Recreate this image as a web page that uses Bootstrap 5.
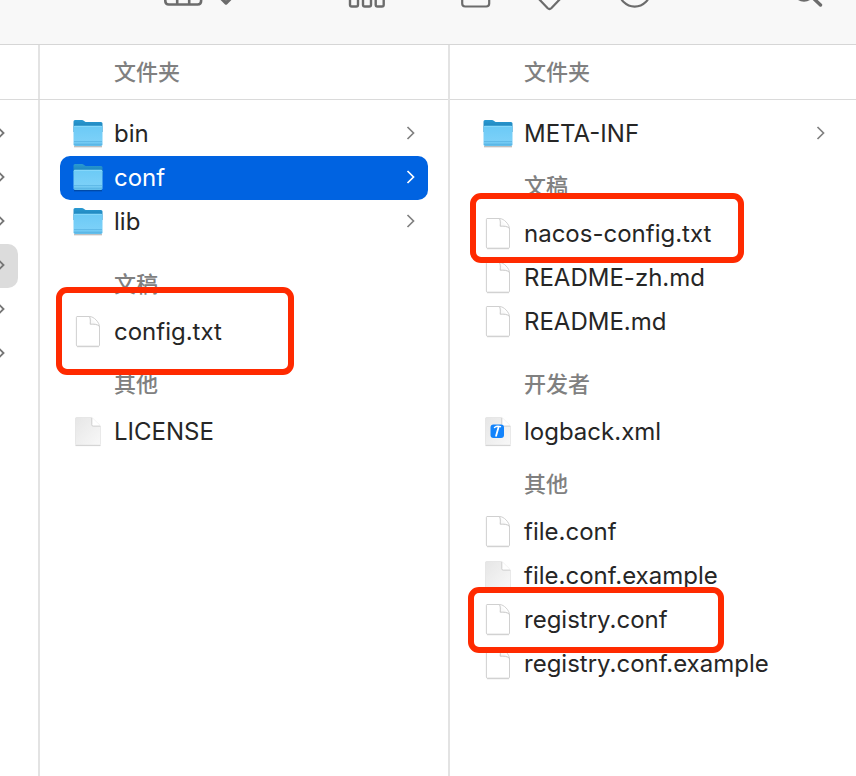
<!DOCTYPE html>
<html lang="zh-CN">
<head>
<meta charset="utf-8">
<meta name="viewport" content="width=device-width, initial-scale=1">
<title>conf</title>
<link href="https://cdn.jsdelivr.net/npm/bootstrap@5.3.0/dist/css/bootstrap.min.css" rel="stylesheet">
<style>
  body { font-family: Inter, "Noto Sans CJK SC", sans-serif; font-size: 24px; color: #262626; background: #fff; }
  .toolbar { height: 45px; background: #f8f8f8; border-bottom: 1px solid #d6d6d6; color: #6c6c6c; }
  .browser { display: grid; grid-template-columns: 40px 410fr 406fr; }
  .pane { border-right: 2px solid #e3e3e3; min-width: 0; }
  .pane:last-child { border-right: 0; }
  .pane-head { height: 55px; padding-left: 74px; border-bottom: 1px solid #dadada; }
  .pane-title, .group-title { font-size: 22px; font-weight: 500; line-height: 32px; color: #808080; margin: 0; }
  .pane-list { padding: 12px 20px; }
  .pane:last-child .pane-list { padding-right: 18px; }
  .entry { height: 44px; padding: 0 12px; gap: 10px; border-radius: 10px; color: inherit; text-decoration: none; white-space: nowrap; }
  .entry.selected { background: #0063e1; color: #fff; }
  .entry .chev { color: #808080; }
  .entry.selected .chev { color: #fff; }
  .group-title { padding: 14px 0 10px 54px; }
  .group-title.spaced { padding-top: 24px; }
  .parent-list { padding: 12px 20px 12px 0; }
  .parent { height: 44px; color: #767676; }
  .parent.current { background: #dcdcdc; border-radius: 0 10px 10px 0; }
  .marked { position: relative; }
  .marker { position: absolute; border: 6px solid #ff2a00; border-radius: 11px; pointer-events: none; z-index: 2; }
  .marker-config { left: -4px; top: -23px; width: 238px; height: 88px; }
  .marker-nacos { left: 0; top: -19px; width: 274px; height: 70px; }
  .marker-registry { left: -2px; top: -11px; width: 256px; height: 66px; }
</style>
<script src="https://cdn.jsdelivr.net/npm/bootstrap@5.3.0/dist/js/bootstrap.bundle.min.js"></script>
</head>
<body class="min-vh-100 overflow-x-hidden d-flex flex-column">
<svg width="0" height="0" class="position-absolute" aria-hidden="true">
  <defs>
    <linearGradient id="gFolder" x1="0" y1="0" x2="0" y2="1"><stop offset="0" stop-color="#6bcaf6"/><stop offset=".75" stop-color="#7bd0f8"/><stop offset="1" stop-color="#62bdea"/></linearGradient>
    <linearGradient id="gBack" x1="0" y1="0" x2="0" y2="1"><stop offset="0" stop-color="#2a9ad2"/><stop offset="1" stop-color="#1576ad"/></linearGradient>
    <linearGradient id="gGray" x1="0" y1="0" x2="1" y2="1"><stop offset="0" stop-color="#e6e6e6"/><stop offset="1" stop-color="#f8f8f8"/></linearGradient>
    <symbol id="folder" viewBox="0 1 32 32">
      <path d="M2 29.600h28" stroke="#000" stroke-opacity=".25" stroke-width="1.500"/>
      <path d="M1.500 4.500q0-1.500 1.500-1.500h7q1 0 1.800.7l1 .8q.8.600 1.800.600H29q1.500 0 1.500 1.500V15h-29z" fill="url(#gBack)"/>
      <path d="M1.500 10.200q0-1.500 1.500-1.500h26q1.500 0 1.500 1.500v17q0 1.800-1.500 1.800H3q-1.500 0-1.500-1.800z" fill="url(#gFolder)"/>
      <path d="M2 9.400h28" stroke="#91dcfb" stroke-width=".8"/>
      <path d="M2 24.500h28M2 27.300h28" stroke="#4ba9dc" stroke-width=".7" opacity=".75"/>
    </symbol>
    <symbol id="doc" viewBox="0 1 32 32">
      <path d="M5 31.700h22" stroke="#000" stroke-opacity=".2"/>
      <path d="M5 1.500h12.500c4.500 0 10 6 10 10.400v18.300q0 1-1 1H5.400q-1 0-1-1V2.500q0-1 .6-1z" fill="#fff" stroke="#cbcbcb" stroke-width=".9"/>
      <path d="M17.500 1.600c1 1.800.9 4.400.7 7.600 3.600-.2 7.600 0 9.200 2.200" fill="#fafafa" stroke="#c2c2c2" stroke-width=".9"/>
    </symbol>
    <symbol id="graydoc" viewBox="0 1 32 32">
      <path d="M3.500 30.600h25" stroke="#000" stroke-opacity=".2"/>
      <path d="M4.500 2.500h15.300l8.700 8.600v18q0 1-1 1h-23q-1 0-1-1V3.500q0-1 1-1z" fill="url(#gGray)" stroke="#dedede" stroke-width=".6"/>
      <path d="M19.800 2.500v7.300q0 1.300 1.300 1.300h7.400z" fill="#fff"/>
      <path d="M19.800 3v6.800q0 1.300 1.300 1.300h7" fill="none" stroke="#c4c4c4" stroke-width=".8"/>
    </symbol>
    <symbol id="xml" viewBox="0 0 32 32">
      <use href="#graydoc" width="32" height="32"/>
      <rect x="8.500" y="8.500" width="13.500" height="13.500" rx="3" fill="#1283fb"/>
      <path d="M16.600 11l-2.500 8.800" stroke="#fff" stroke-width="1.800" stroke-linecap="round"/>
      <path d="M12.500 11.500q2.500-2 6-.8" fill="none" stroke="#fff" stroke-width="1.400" stroke-linecap="round"/>
    </symbol>
    <symbol id="chevron" viewBox="0 1 10 16"><path d="M1.500 2l6 6-6 6" fill="none" stroke="currentColor" stroke-width="1.700"/></symbol>
    <symbol id="halfchevron" viewBox="4 1 6 16"><path d="M1.500 2l6 6-6 6" fill="none" stroke="currentColor" stroke-width="1.900"/></symbol>
  </defs>
</svg>

<header class="toolbar">
  <svg class="d-block" width="856" height="12" viewBox="0 0 856 12" fill="none" stroke="currentColor" stroke-width="2.600" stroke-linecap="round" stroke-linejoin="round" role="img" aria-label="工具栏">
    <path d="M165.300-8v9q0 3.500 3.500 3.500h28.800q3.500 0 3.500-3.500v-9M177.200-8V4M189.200-8V4"/>
    <path d="M220.500-2.500l5.500 5.500 5.500-5.500" stroke-width="3.400"/>
    <rect x="350" y="-2" width="8" height="8.500" rx="1.800" stroke-width="2.400"/><rect x="363" y="-2" width="8" height="8.500" rx="1.800" stroke-width="2.400"/><rect x="375.700" y="-2" width="8" height="8.500" rx="1.800" stroke-width="2.400"/>
    <path d="M462.200-8V3.500q0 3 3 3h21q3 0 3-3V-8" stroke-width="2.200"/>
    <path d="M537-3l10.500 11q2 2 4 0L562-3" stroke-width="2.200"/>
    <circle cx="634.700" cy="-9" r="15.600" stroke-width="2.200"/>
    <circle cx="804" cy="-9" r="9.500"/><path d="M811.500-3.500l9 8.500" stroke-width="3.400"/>
  </svg>
</header>

<main class="browser flex-grow-1">
  <section class="pane" aria-label="上级">
    <div class="pane-head"></div>
    <div class="parent-list">
      <div class="parent d-flex align-items-center"><svg width="6" height="16"><use href="#halfchevron"/></svg></div>
      <div class="parent d-flex align-items-center"><svg width="6" height="16"><use href="#halfchevron"/></svg></div>
      <div class="parent d-flex align-items-center"><svg width="6" height="16"><use href="#halfchevron"/></svg></div>
      <div class="parent current d-flex align-items-center"><svg width="6" height="16"><use href="#halfchevron"/></svg></div>
      <div class="parent d-flex align-items-center"><svg width="6" height="16"><use href="#halfchevron"/></svg></div>
      <div class="parent d-flex align-items-center"><svg width="6" height="16"><use href="#halfchevron"/></svg></div>
    </div>
  </section>

  <section class="pane">
    <div class="pane-head d-flex align-items-center"><h2 class="pane-title">文件夹</h2></div>
    <div class="pane-list">
      <a href="#" class="entry d-flex align-items-center"><svg width="32" height="32"><use href="#folder"/></svg><span>bin</span><svg class="chev ms-auto" width="10" height="16"><use href="#chevron"/></svg></a>
      <a href="#" class="entry selected d-flex align-items-center" aria-current="true"><svg width="32" height="32"><use href="#folder"/></svg><span>conf</span><svg class="chev ms-auto" width="10" height="16"><use href="#chevron"/></svg></a>
      <a href="#" class="entry d-flex align-items-center"><svg width="32" height="32"><use href="#folder"/></svg><span>lib</span><svg class="chev ms-auto" width="10" height="16"><use href="#chevron"/></svg></a>
      <h3 class="group-title spaced">文稿</h3>
      <div class="marked">
        <a href="#" class="entry d-flex align-items-center"><svg width="32" height="32"><use href="#doc"/></svg><span>config.txt</span></a>
        <div class="marker marker-config"></div>
      </div>
      <h3 class="group-title">其他</h3>
      <a href="#" class="entry d-flex align-items-center"><svg width="32" height="32"><use href="#graydoc"/></svg><span>LICENSE</span></a>
    </div>
  </section>

  <section class="pane">
    <div class="pane-head d-flex align-items-center"><h2 class="pane-title">文件夹</h2></div>
    <div class="pane-list">
      <a href="#" class="entry d-flex align-items-center"><svg width="32" height="32"><use href="#folder"/></svg><span>META-INF</span><svg class="chev ms-auto" width="10" height="16"><use href="#chevron"/></svg></a>
      <h3 class="group-title">文稿</h3>
      <div class="marked">
        <a href="#" class="entry d-flex align-items-center"><svg width="32" height="32"><use href="#doc"/></svg><span>nacos-config.txt</span></a>
        <div class="marker marker-nacos"></div>
      </div>
      <a href="#" class="entry d-flex align-items-center"><svg width="32" height="32"><use href="#doc"/></svg><span>README-zh.md</span></a>
      <a href="#" class="entry d-flex align-items-center"><svg width="32" height="32"><use href="#doc"/></svg><span>README.md</span></a>
      <h3 class="group-title spaced">开发者</h3>
      <a href="#" class="entry d-flex align-items-center"><svg width="32" height="32"><use href="#xml"/></svg><span>logback.xml</span></a>
      <h3 class="group-title">其他</h3>
      <a href="#" class="entry d-flex align-items-center"><svg width="32" height="32"><use href="#doc"/></svg><span>file.conf</span></a>
      <a href="#" class="entry d-flex align-items-center"><svg width="32" height="32"><use href="#graydoc"/></svg><span>file.conf.example</span></a>
      <div class="marked">
        <a href="#" class="entry d-flex align-items-center"><svg width="32" height="32"><use href="#doc"/></svg><span>registry.conf</span></a>
        <div class="marker marker-registry"></div>
      </div>
      <a href="#" class="entry d-flex align-items-center"><svg width="32" height="32"><use href="#doc"/></svg><span>registry.conf.example</span></a>
    </div>
  </section>
</main>
</body>
</html>
